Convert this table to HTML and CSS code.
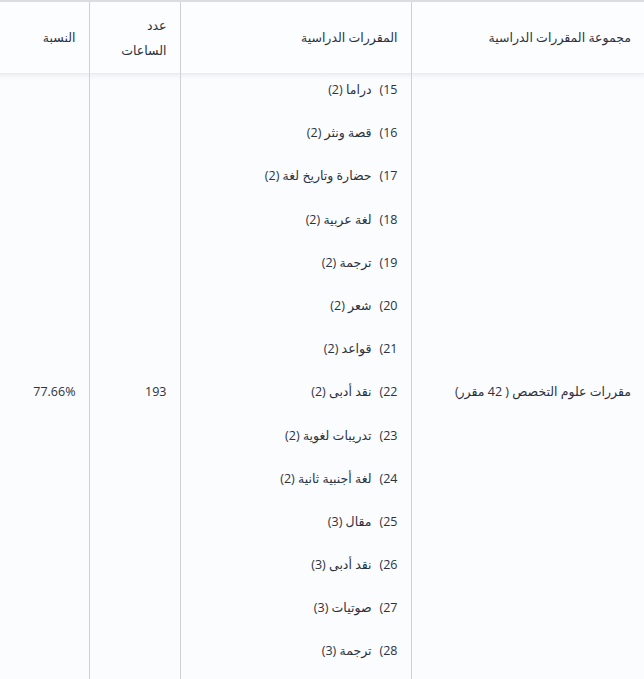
FILE: index.html
```html
<!DOCTYPE html>
<html lang="ar" dir="rtl">
<head>
<meta charset="utf-8">
<link rel="stylesheet" href="styles.css">
</head>
<body>
<table class="plan">
  <colgroup>
    <col class="c-group">
    <col class="c-courses">
    <col class="c-hours">
    <col class="c-ratio">
  </colgroup>
  <thead>
    <tr>
      <th>مجموعة المقررات الدراسية</th>
      <th>المقررات الدراسية</th>
      <th>عدد<br>الساعات</th>
      <th>النسبة</th>
    </tr>
  </thead>
  <tbody>
    <tr>
      <td>مقررات علوم التخصص ( 42 مقرر)</td>
      <td class="courses">
        <ul class="course-list">
          <li><span class="num">15)</span>دراما (2)</li>
          <li><span class="num">16)</span>قصة ونثر (2)</li>
          <li><span class="num">17)</span>حضارة وتاريخ لغة (2)</li>
          <li><span class="num">18)</span>لغة عربية (2)</li>
          <li><span class="num">19)</span>ترجمة (2)</li>
          <li><span class="num">20)</span>شعر (2)</li>
          <li><span class="num">21)</span>قواعد (2)</li>
          <li><span class="num">22)</span>نقد أدبى (2)</li>
          <li><span class="num">23)</span>تدريبات لغوية (2)</li>
          <li><span class="num">24)</span>لغة أجنبية ثانية (2)</li>
          <li><span class="num">25)</span>مقال (3)</li>
          <li><span class="num">26)</span>نقد أدبى (3)</li>
          <li><span class="num">27)</span>صوتيات (3)</li>
          <li><span class="num">28)</span>ترجمة (3)</li>
        </ul>
      </td>
      <td>193</td>
      <td>77.66%</td>
    </tr>
  </tbody>
</table>
</body>
</html>
```
FILE: styles.css
```css
html, body {
  margin: 0;
  padding: 0;
  background: #fbfcfe;
}
body {
  font-family: "Open Sans", "DejaVu Sans", sans-serif;
  font-size: 12.5px;
  color: #2b3240;
}
.plan {
  width: 644px;
  border-collapse: collapse;
  border-top: 2px solid #dcdde0;
  table-layout: fixed;
}
.c-group { width: 233px; }
.c-courses { width: 231px; }
.c-hours { width: 91px; }
.c-ratio { width: 89px; }
.plan th, .plan td {
  text-align: right;
  font-weight: normal;
  padding: 0 13px;
  border-left: 1px solid #cfd0d4;
  vertical-align: middle;
}
.plan th:last-child, .plan td:last-child {
  border-left: none;
}
.plan thead th {
  height: 72px;
  box-sizing: border-box;
  background: #fcfdfe;
  line-height: 25px;
}
.plan tbody td {
  background: linear-gradient(#e9eaed, #f4f5f8 3px, #fbfcfe 7px);
}
.plan td.courses {
  padding: 6px 13px 27px;
}
.course-list {
  list-style: none;
  margin: 0;
  padding: 0;
}
.course-list li {
  height: 43.2px;
  line-height: 22px;
}
.num {
  margin-left: 8px;
}
```
